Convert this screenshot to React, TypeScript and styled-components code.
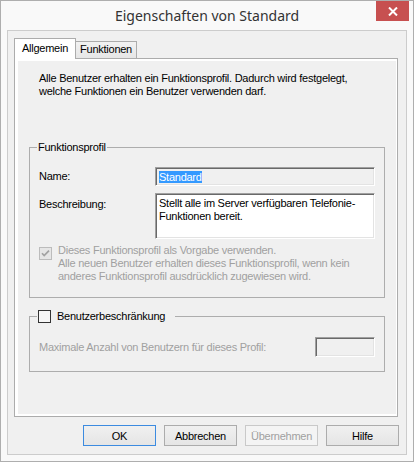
import styled, { createGlobalStyle } from "styled-components";

const GlobalStyle = createGlobalStyle`
  html, body {
    margin: 0;
    padding: 0;
    background: #ffffff;
  }
  body {
    font-family: "Liberation Sans", Arial, sans-serif;
    font-size: 11px;
    letter-spacing: -0.25px;
    color: #000000;
  }
`;

const DISABLED = "#a0a0a0";

const Window = styled.div`
  box-sizing: border-box;
  width: 414px;
  height: 462px;
  border: 1px solid #aeaeae;
  background: #f9f9f9;
  display: flex;
  flex-direction: column;
`;

const TitleBar = styled.div`
  height: 29px;
  display: grid;
  grid-template-columns: 1fr auto 1fr;
  align-items: start;
`;

const Title = styled.div`
  grid-column: 2;
  font-family: "Noto Sans", "Open Sans", sans-serif;
  font-size: 14px;
  letter-spacing: 0;
  line-height: 29px;
  color: #333333;
`;

const CloseButton = styled.div`
  grid-column: 3;
  justify-self: end;
  width: 33px;
  height: 20px;
  margin-right: 4px;
  background: #c75050;
  display: flex;
  align-items: center;
  justify-content: center;
`;

const Client = styled.div`
  flex: 1;
  margin: 0 6px 6px;
  border: 1px solid #cccccc;
  background: #f0f0f0;
  display: flex;
  flex-direction: column;
  padding: 7px 7px 8px 6px;
`;

const TabStrip = styled.div`
  display: flex;
  align-items: flex-end;
  height: 21px;
  margin-bottom: -1px;
  position: relative;
  z-index: 1;
`;

const Tab = styled.div<{ active?: boolean }>`
  box-sizing: border-box;
  border: 1px solid #acacac;
  border-bottom: none;
  height: ${(p) => (p.active ? "21px" : "17px")};
  margin-bottom: ${(p) => (p.active ? "0" : "1px")};
  margin-left: ${(p) => (p.active ? "0" : "-1px")};
  padding: ${(p) => (p.active ? "3px 7px 0 7px" : "1px 4px 0 4px")};
  background: ${(p) => (p.active ? "#ffffff" : "linear-gradient(#f2f2f2, #e6e6e6)")};
  line-height: 13px;
  white-space: nowrap;
`;

const Panel = styled.div`
  box-sizing: border-box;
  height: 359px;
  margin-right: 1px;
  border: 1px solid #acacac;
  background: #ffffff;
  padding: 2px 1px 2px 3px;
  display: flex;
`;

const Page = styled.div`
  flex: 1;
  background: #f0f0f0;
  padding: 11px 11px 0 11px;
  display: flex;
  flex-direction: column;
`;

const Intro = styled.p`
  margin: 0 0 0 10px;
  line-height: 13px;
`;

const Group = styled.fieldset<{ gap: number }>`
  margin: ${(p) => p.gap}px 0 0 0;
  padding: 0 9px 14px 9px;
  border: 1px solid #adadad;
  min-width: 0;
`;

const Legend = styled.legend<{ trail?: number }>`
  padding: 0 ${(p) => p.trail ?? 1}px 0 1px;
  margin-left: -2px;
  line-height: 13px;
  display: flex;
  align-items: center;
  gap: 6px;
`;

const Row = styled.div<{ top: number; align?: string }>`
  display: flex;
  align-items: ${(p) => p.align ?? "center"};
  justify-content: space-between;
  margin-top: ${(p) => p.top}px;
`;

const FieldLabel = styled.div<{ pad?: number; disabled?: boolean }>`
  width: 116px;
  flex: none;
  padding-top: ${(p) => p.pad ?? 0}px;
  line-height: 13px;
  color: ${(p) => (p.disabled ? DISABLED : "#000000")};
`;

const sunken = `
  box-sizing: border-box;
  border: 1px solid;
  border-color: #a0a0a0 #ffffff #ffffff #a0a0a0;
  box-shadow: inset 1px 1px 0 #696969, inset -1px -1px 0 #e3e3e3;
`;

const TextBox = styled.div<{ h: number; w?: number; bg: string }>`
  ${sunken}
  flex: ${(p) => (p.w ? "none" : "1")};
  width: ${(p) => (p.w ? `${p.w}px` : "auto")};
  height: ${(p) => p.h}px;
  background: ${(p) => p.bg};
  padding: 3px 4px 0 3px;
  line-height: 13px;
`;

const Selected = styled.span`
  background: #3399ff;
  color: #ffffff;
`;

const CheckRow = styled.div`
  display: flex;
  align-items: flex-start;
  gap: 6px;
  margin-top: 5px;
  color: ${DISABLED};
  line-height: 13px;
`;

const BoxSlot = styled.div`
  flex: none;
  padding-top: 3px;
  display: flex;
`;

const ButtonRow = styled.div`
  display: flex;
  justify-content: flex-end;
  gap: 8px;
  margin-top: 8px;
`;

const Button = styled.div<{ variant?: "default" | "disabled" }>`
  box-sizing: border-box;
  width: 73px;
  height: 21px;
  display: flex;
  align-items: center;
  justify-content: center;
  border: 1px solid
    ${(p) =>
      p.variant === "default"
        ? "#3c8be0"
        : p.variant === "disabled"
        ? "#c9c9c9"
        : "#acacac"};
  background: ${(p) =>
    p.variant === "disabled"
      ? "#f4f4f4"
      : "linear-gradient(#f0f0f0, #e5e5e5)"};
  color: ${(p) => (p.variant === "disabled" ? DISABLED : "#000000")};
`;

const CheckBox = ({ checked, disabled }: { checked?: boolean; disabled?: boolean }) => (
  <svg width="13" height="13" viewBox="0 0 13 13">
    <rect
      x="0.5"
      y="0.5"
      width="12"
      height="12"
      fill={disabled ? "#e6e6e6" : "#f6f6f6"}
      stroke={disabled ? "#bcbcbc" : "#333333"}
    />
    {checked && (
      <path
        d="M3 6.2 L5.2 8.6 L10 3.6"
        fill="none"
        stroke={disabled ? "#a2a2a2" : "#000000"}
        strokeWidth="1.7"
      />
    )}
  </svg>
);

export default function App() {
  return (
    <>
      <GlobalStyle />
      <Window>
        <TitleBar>
          <Title>Eigenschaften von Standard</Title>
          <CloseButton>
            <svg width="10" height="9" viewBox="0 0 10 9">
              <path d="M1 0.5 L9 8.5 M9 0.5 L1 8.5" stroke="#ffffff" strokeWidth="2" />
            </svg>
          </CloseButton>
        </TitleBar>
        <Client>
          <TabStrip>
            <Tab active>Allgemein</Tab>
            <Tab>Funktionen</Tab>
          </TabStrip>
          <Panel>
            <Page>
              <Intro>
                Alle Benutzer erhalten ein Funktionsprofil. Dadurch wird festgelegt,
                <br />
                welche Funktionen ein Benutzer verwenden darf.
              </Intro>

              <Group gap={43}>
                <Legend>Funktionsprofil</Legend>
                <Row top={13}>
                  <FieldLabel>Name:</FieldLabel>
                  <TextBox h={19} bg="#f0f0f0">
                    <Selected>Standard</Selected>
                  </TextBox>
                </Row>
                <Row top={7} align="flex-start">
                  <FieldLabel pad={5}>Beschreibung:</FieldLabel>
                  <TextBox h={46} bg="#ffffff">
                    Stellt alle im Server verfügbaren Telefonie-
                    <br />
                    Funktionen bereit.
                  </TextBox>
                </Row>
                <CheckRow>
                  <BoxSlot>
                    <CheckBox checked disabled />
                  </BoxSlot>
                  <div>
                    Dieses Funktionsprofil als Vorgabe verwenden.
                    <br />
                    Alle neuen Benutzer erhalten dieses Funktionsprofil, wenn kein
                    <br />
                    anderes Funktionsprofil ausdrücklich zugewiesen wird.
                  </div>
                </CheckRow>
              </Group>

              <Group gap={12}>
                <Legend trail={10}>
                  <CheckBox />
                  Benutzerbeschränkung
                </Legend>
                <Row top={14}>
                  <FieldLabel disabled style={{ width: "auto" }}>
                    Maximale Anzahl von Benutzern für dieses Profil:
                  </FieldLabel>
                  <TextBox h={20} w={60} bg="#f0f0f0" />
                </Row>
              </Group>
            </Page>
          </Panel>
          <ButtonRow>
            <Button variant="default">OK</Button>
            <Button>Abbrechen</Button>
            <Button variant="disabled">Übernehmen</Button>
            <Button>Hilfe</Button>
          </ButtonRow>
        </Client>
      </Window>
    </>
  );
}
